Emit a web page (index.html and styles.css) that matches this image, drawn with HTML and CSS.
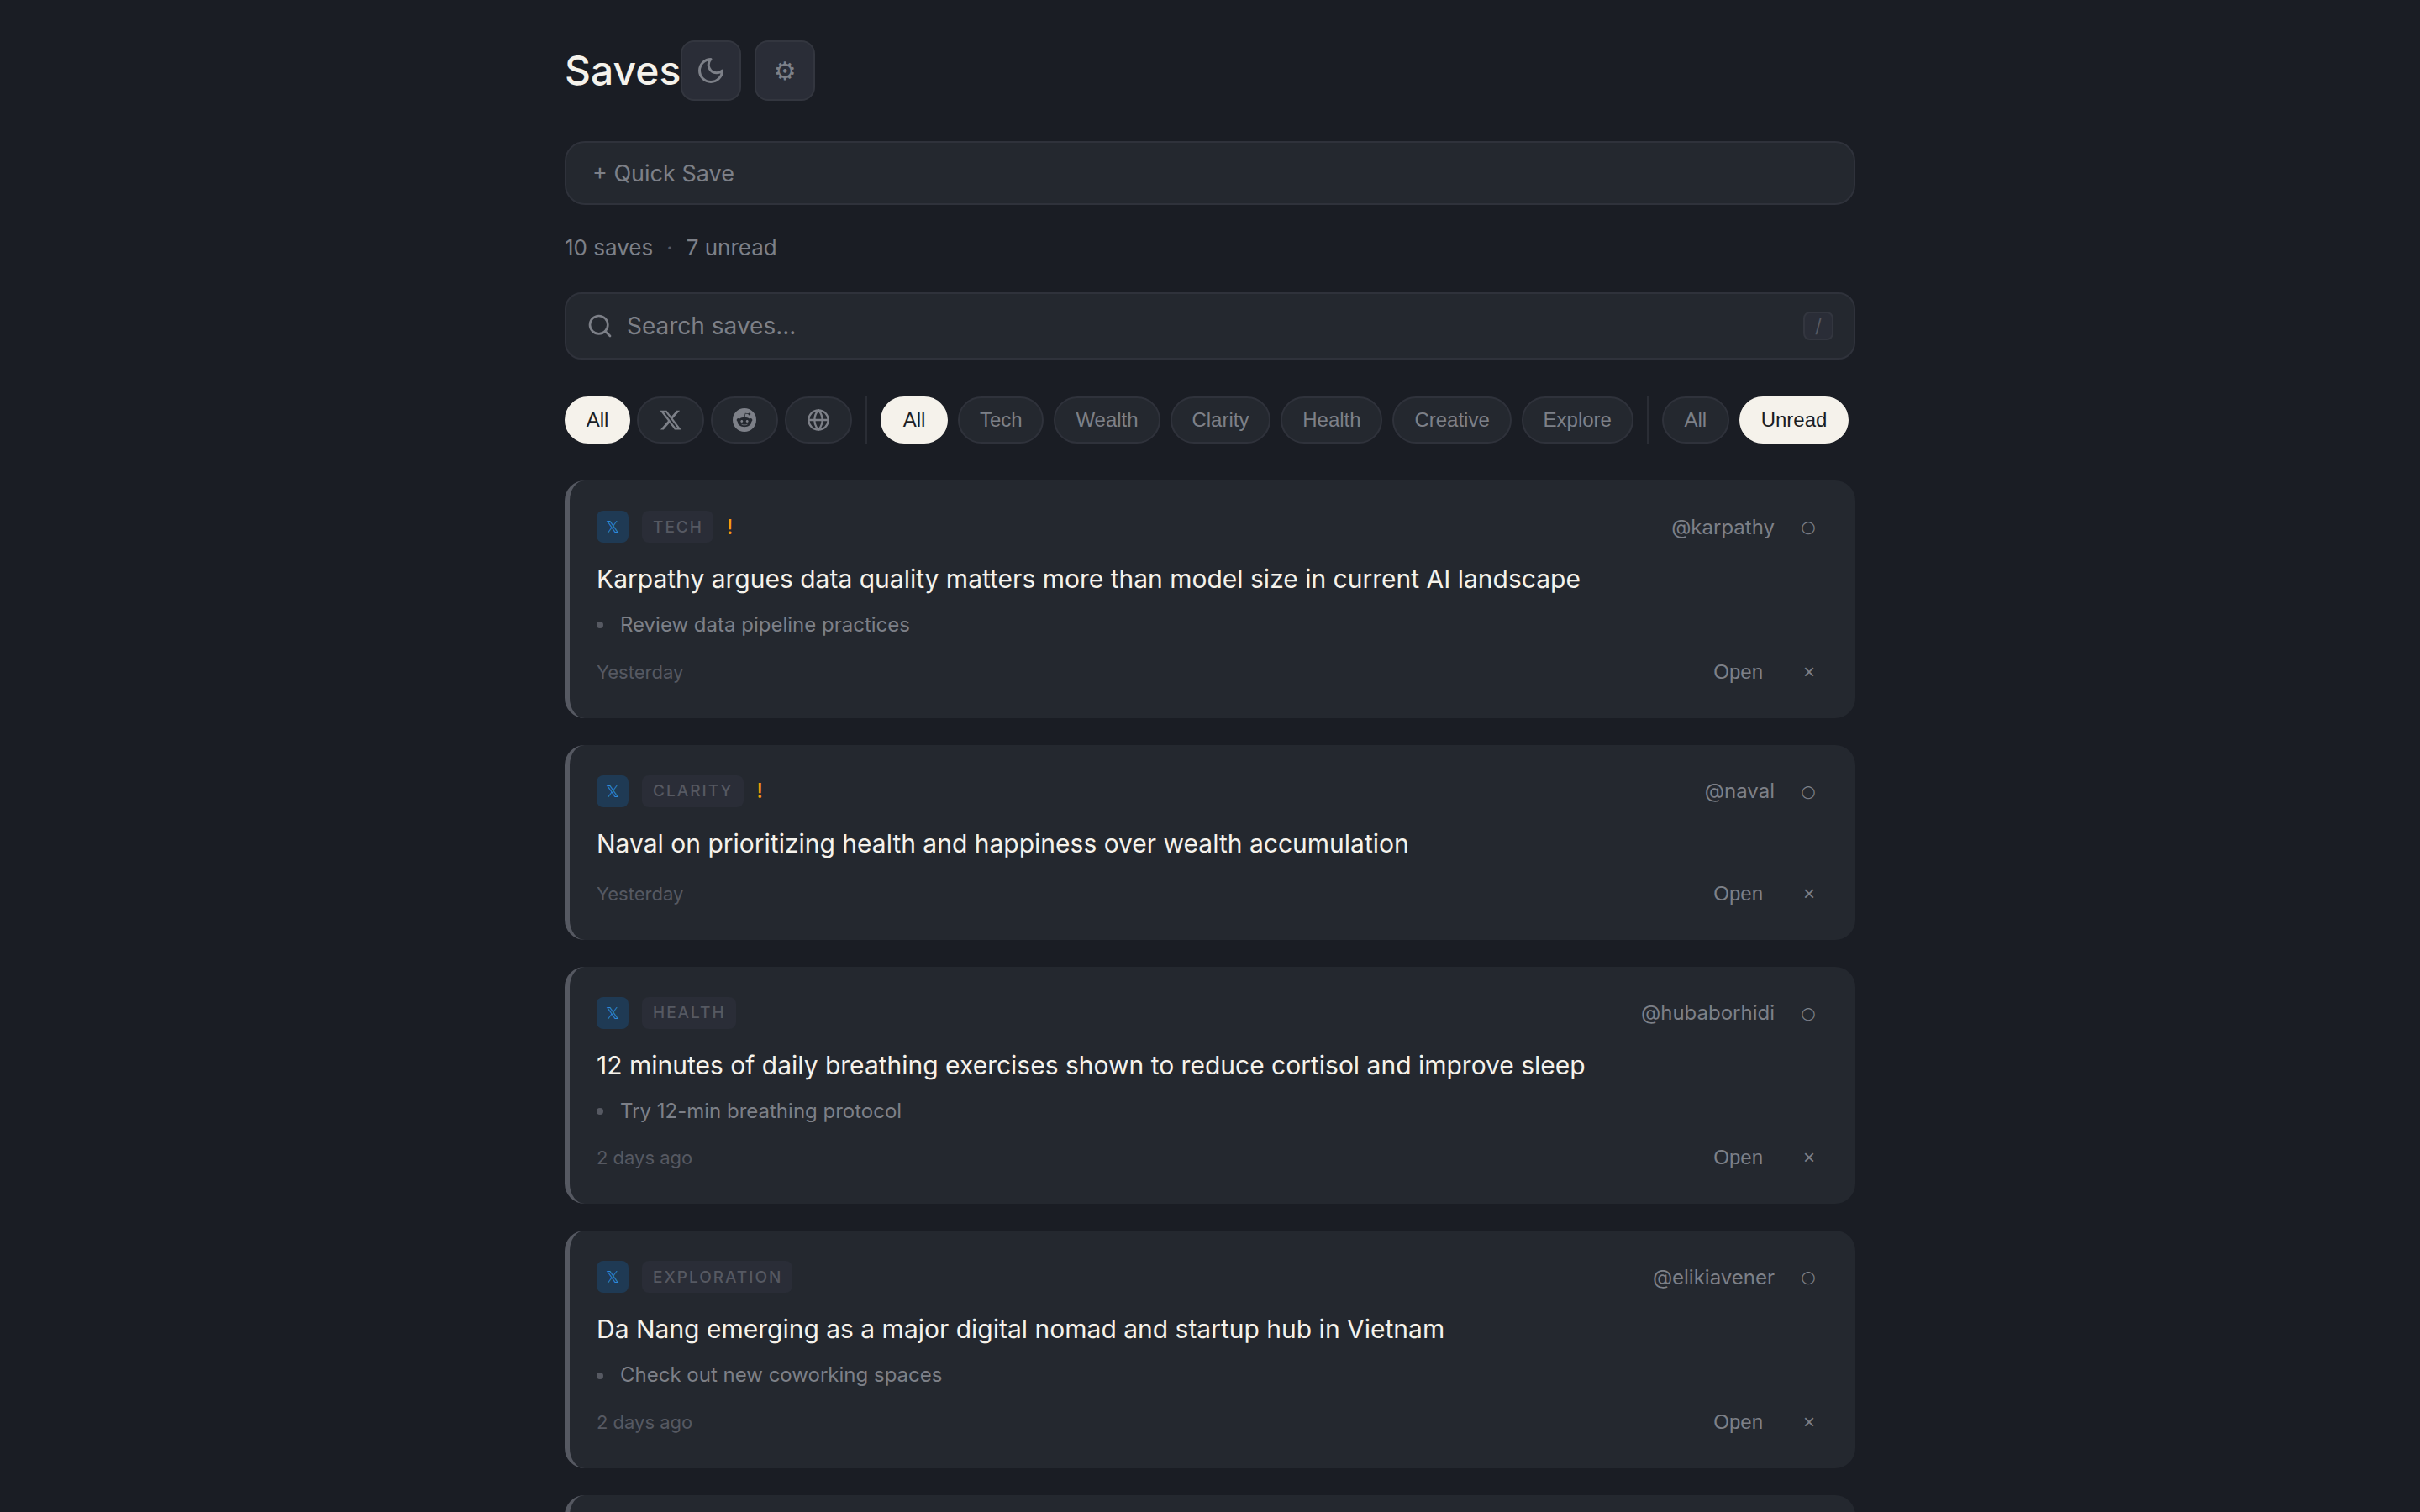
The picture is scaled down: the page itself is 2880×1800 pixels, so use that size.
FILE: index.html
```html
<!DOCTYPE html>
<html lang="en">
<head>
<meta charset="utf-8">
<title>Saves</title>
<link rel="stylesheet" href="styles.css">
</head>
<body>
<main class="page">
  <header class="header">
    <h1 class="title">Saves</h1>
    <button class="icon-btn"><svg class="moon" viewBox="0 0 24 24"><path d="M12 3a6 6 0 0 0 9 9 9 9 0 1 1-9-9Z"/></svg></button>
    <button class="icon-btn gear">⚙</button>
  </header>
  <div class="quick">+ Quick Save</div>
  <div class="stats"><span>10 saves</span><span class="dot">·</span><span>7 unread</span></div>
  <div class="search">
    <svg class="search-icon" viewBox="0 0 24 24"><circle cx="11" cy="11" r="8"/><path d="m21 21-4.3-4.3"/></svg>
    <span class="search-text">Search saves...</span>
    <kbd class="kbd">/</kbd>
  </div>
  <nav class="filters">
    <div class="group tight">
      <button class="pill on">All</button>
      <button class="pill"><svg class="pill-icon" viewBox="0 0 24 24"><path d="M18.244 2.25h3.308l-7.227 8.26 8.502 11.24H16.17l-5.214-6.817L4.99 21.75H1.68l7.73-8.835L1.254 2.25H8.08l4.713 6.231zm-1.161 17.52h1.833L7.084 4.126H5.117z"/></svg></button>
      <button class="pill"><svg class="pill-icon" viewBox="0 0 24 24"><path d="M12 0A12 12 0 0 0 0 12a12 12 0 0 0 12 12 12 12 0 0 0 12-12A12 12 0 0 0 12 0zm5.01 4.744c.688 0 1.25.561 1.25 1.249a1.25 1.25 0 0 1-2.498.056l-2.597-.547-.8 3.747c1.824.07 3.48.632 4.674 1.488.308-.309.73-.491 1.207-.491.968 0 1.754.786 1.754 1.754 0 .716-.435 1.333-1.01 1.614a3.111 3.111 0 0 1 .042.52c0 2.694-3.13 4.87-7.004 4.87-3.874 0-7.004-2.176-7.004-4.87 0-.183.015-.366.043-.534A1.748 1.748 0 0 1 4.028 12c0-.968.786-1.754 1.754-1.754.463 0 .898.196 1.207.49 1.207-.883 2.878-1.43 4.744-1.487l.885-4.182a.342.342 0 0 1 .14-.197.35.35 0 0 1 .238-.042l2.906.617a1.214 1.214 0 0 1 1.108-.701zM9.25 12C8.561 12 8 12.562 8 13.25c0 .687.561 1.248 1.25 1.248.687 0 1.248-.561 1.248-1.249 0-.688-.561-1.249-1.249-1.249zm5.5 0c-.687 0-1.248.561-1.248 1.25 0 .687.561 1.248 1.249 1.248.688 0 1.249-.561 1.249-1.249 0-.687-.562-1.249-1.25-1.249zm-5.466 3.99a.327.327 0 0 0-.231.094.33.33 0 0 0 0 .463c.842.842 2.484.913 2.961.913.477 0 2.105-.056 2.961-.913a.361.361 0 0 0 .029-.463.33.33 0 0 0-.464 0c-.547.533-1.684.73-2.512.73-.828 0-1.979-.196-2.512-.73a.326.326 0 0 0-.232-.095z"/></svg></button>
      <button class="pill"><svg class="pill-icon line" viewBox="0 0 24 24"><circle cx="12" cy="12" r="10"/><path d="M12 2a14.5 14.5 0 0 0 0 20 14.5 14.5 0 0 0 0-20"/><path d="M2 12h20"/></svg></button>
    </div>
    <div class="sep"></div>
    <div class="group">
      <button class="pill on">All</button>
      <button class="pill">Tech</button>
      <button class="pill">Wealth</button>
      <button class="pill">Clarity</button>
      <button class="pill">Health</button>
      <button class="pill">Creative</button>
      <button class="pill">Explore</button>
    </div>
    <div class="sep"></div>
    <div class="group">
      <button class="pill">All</button>
      <button class="pill on">Unread</button>
    </div>
  </nav>
  <section class="cards">
    <article class="card">
      <div class="card-top">
        <span class="badge">𝕏</span><span class="tag">TECH</span><span class="bang">!</span>
        <span class="author">@karpathy</span><span class="read">○</span>
      </div>
      <h2 class="card-title">Karpathy argues data quality matters more than model size in current AI landscape</h2>
      <ul class="todo"><li>Review data pipeline practices</li></ul>
      <div class="card-foot"><span class="when">Yesterday</span><button class="open">Open</button><button class="close">×</button></div>
    </article>
    <article class="card">
      <div class="card-top">
        <span class="badge">𝕏</span><span class="tag">CLARITY</span><span class="bang">!</span>
        <span class="author">@naval</span><span class="read">○</span>
      </div>
      <h2 class="card-title">Naval on prioritizing health and happiness over wealth accumulation</h2>
      <div class="card-foot"><span class="when">Yesterday</span><button class="open">Open</button><button class="close">×</button></div>
    </article>
    <article class="card">
      <div class="card-top">
        <span class="badge">𝕏</span><span class="tag">HEALTH</span>
        <span class="author">@hubaborhidi</span><span class="read">○</span>
      </div>
      <h2 class="card-title">12 minutes of daily breathing exercises shown to reduce cortisol and improve sleep</h2>
      <ul class="todo"><li>Try 12-min breathing protocol</li></ul>
      <div class="card-foot"><span class="when">2 days ago</span><button class="open">Open</button><button class="close">×</button></div>
    </article>
    <article class="card">
      <div class="card-top">
        <span class="badge">𝕏</span><span class="tag">EXPLORATION</span>
        <span class="author">@elikiavener</span><span class="read">○</span>
      </div>
      <h2 class="card-title">Da Nang emerging as a major digital nomad and startup hub in Vietnam</h2>
      <ul class="todo"><li>Check out new coworking spaces</li></ul>
      <div class="card-foot"><span class="when">2 days ago</span><button class="open">Open</button><button class="close">×</button></div>
    </article>
    <article class="card card-peek"></article>
  </section>
</main>
</body>
</html>
```
FILE: styles.css
```css
* { box-sizing: border-box; }
html, body { margin: 0; height: 100%; overflow: hidden; }
body { background: #1a1d24; color: #f5f2eb; font-family: Inter, "Liberation Sans", sans-serif; }
button { font-family: "Liberation Sans", Arial, sans-serif; cursor: pointer; }
.page { width: 1536px; margin: 0 auto; padding-top: 48px; }

.header { display: flex; align-items: center; gap: 16px; height: 72px; }
.title { margin: 0 -16px 0 0; flex: none; font-size: 48px; font-weight: 500; line-height: 72px; }
.icon-btn { width: 72px; height: 72px; padding: 0; display: flex; align-items: center; justify-content: center; background: #2a2d37; border: 2px solid #33363f; border-radius: 16px; color: #7d8088; }
.moon { width: 36px; height: 36px; fill: none; stroke: #7d8088; stroke-width: 2; stroke-linecap: round; stroke-linejoin: round; }
.gear { font-family: "DejaVu Sans", sans-serif; font-size: 30px; }

.quick { margin-top: 48px; height: 76px; padding: 0 31px; display: flex; align-items: center; background: #24282f; border: 2px solid #2f323b; border-radius: 24px; font-size: 27px; color: #7d8088; }
.stats { margin-top: 34px; height: 32px; display: flex; align-items: center; gap: 16px; font-size: 26px; color: #7d8088; }
.dot { color: #565962; }

.search { margin-top: 38px; height: 80px; padding: 0 24px; display: flex; align-items: center; background: #24282f; border: 2px solid #2f323b; border-radius: 20px; }
.search-icon { width: 32px; height: 32px; fill: none; stroke: #7d8088; stroke-width: 2; stroke-linecap: round; stroke-linejoin: round; }
.search-text { margin-left: 16px; flex: 1; font-size: 28px; color: #7d8088; }
.kbd { width: 36px; height: 34px; display: flex; align-items: center; justify-content: center; background: #2a2d37; border: 2px solid #33363f; border-radius: 8px; font-family: Inter, sans-serif; font-size: 22px; color: #565962; }

.filters { margin-top: 44px; display: flex; align-items: stretch; height: 56px; }
.group { display: flex; gap: 12px; }
.group.tight { gap: 8px; }
.sep { width: 2px; margin: 0 16px; background: #2a2d35; }
.pill { height: 56px; padding: 0 23.9px; display: flex; align-items: center; justify-content: center; background: #24282f; border: 2px solid #2f323b; border-radius: 28px; font-size: 24px; color: #7d8088; }
.pill.on { background: #f5f2eb; border-color: #f5f2eb; color: #1a1d24; }
.pill-icon { width: 28px; height: 28px; fill: #7d8088; flex: none; }
.pill-icon.line { fill: none; stroke: #7d8088; stroke-width: 2; stroke-linecap: round; stroke-linejoin: round; }
.tight .pill { width: 80px; padding: 0; }
.tight .pill:first-child { width: 78px; }
.group .pill:first-child:not(.tight *) { width: 80px; padding: 0; }

.cards { margin-top: 44px; display: flex; flex-direction: column; gap: 32px; }
.card { padding: 36px 32px 32px; background: #24282f; border-left: 6px solid #565962; border-radius: 24px; }
.card-peek { height: 200px; }
.card-top { display: flex; align-items: center; height: 38px; }
.badge { width: 38px; height: 38px; display: flex; align-items: center; justify-content: center; background: #1f3a54; border-radius: 8px; font-family: "DejaVu Sans", sans-serif; font-size: 20px; color: #2d8ad8; }
.tag { margin-left: 16px; height: 38px; padding: 0 12px 0 13px; display: flex; align-items: center; background: #2a2d37; border-radius: 8px; font-size: 19px; font-weight: 500; letter-spacing: 2px; color: #565962; }
.bang { margin-left: 16px; font-size: 24px; font-weight: 500; color: #f59e0b; }
.author { margin-left: auto; font-size: 24px; color: #7d8088; }
.read { width: 16px; margin: 0 16px 0 32px; display: flex; justify-content: center; font-family: "DejaVu Sans", sans-serif; font-size: 20px; color: #7d8088; }
.card-title { margin: 20px 0 0; font-size: 30px; font-weight: 400; line-height: 46px; color: #f5f2eb; }
.todo { margin: 14px 0 0; padding: 0; list-style: none; font-size: 24px; line-height: 36.67px; color: #7d8088; }
.todo li { display: flex; align-items: center; gap: 20px; }
.todo li::before { content: ""; width: 8px; height: 8px; border-radius: 50%; background: #565962; }
.card-foot { margin-top: 15px; margin-bottom: 1px; display: flex; align-items: center; height: 44px; }
.when { margin-right: auto; font-size: 22px; color: #565962; }
.open, .close { padding: 0; background: none; border: 0; color: #7d8088; }
.open { font-size: 24px; }
.close { width: 16px; margin: 0 15px 0 47px; font-size: 24px; }
```
